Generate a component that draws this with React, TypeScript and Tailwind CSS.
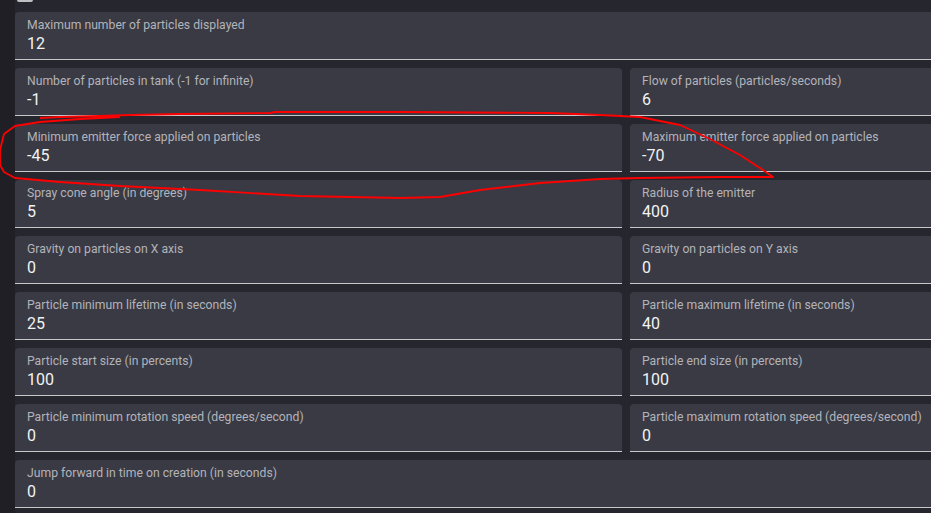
import React from "react";

type Field = { label: string; value: string; full?: boolean };

const fields: Field[] = [
  { label: "Maximum number of particles displayed", value: "12", full: true },
  { label: "Number of particles in tank (-1 for infinite)", value: "-1" },
  { label: "Flow of particles (particles/seconds)", value: "6" },
  { label: "Minimum emitter force applied on particles", value: "-45" },
  { label: "Maximum emitter force applied on particles", value: "-70" },
  { label: "Spray cone angle (in degrees)", value: "5" },
  { label: "Radius of the emitter", value: "400" },
  { label: "Gravity on particles on X axis", value: "0" },
  { label: "Gravity on particles on Y axis", value: "0" },
  { label: "Particle minimum lifetime (in seconds)", value: "25" },
  { label: "Particle maximum lifetime (in seconds)", value: "40" },
  { label: "Particle start size (in percents)", value: "100" },
  { label: "Particle end size (in percents)", value: "100" },
  { label: "Particle minimum rotation speed (degrees/second)", value: "0" },
  { label: "Particle maximum rotation speed (degrees/second)", value: "0" },
  { label: "Jump forward in time on creation (in seconds)", value: "0", full: true },
];

function Card({ f }: { f: Field }) {
  return (
    <div
      className={
        "h-[48px] bg-[#393a43] rounded-t-[4px] border-b border-[#c8c8cc] px-[12px] pt-[5px] flex flex-col " +
        (f.full ? "col-span-2" : "")
      }
    >
      <div className="text-[12.2px] leading-[16px] text-[#b3b3ba] whitespace-nowrap">{f.label}</div>
      <div className="text-[16px] leading-[22px] text-[#f2f2f4] whitespace-nowrap">{f.value}</div>
    </div>
  );
}

const pts =
  "40,118 60,117 100,116 130,115 180,114 270,113 275,112 400,112 550,113 600,115 640,117 680,125 710,139 740,155 760,168 773,177 720,177 640,178 600,179 540,183 480,190 440,197 400,198 300,196 200,190 120,186 60,182 15,178 4,172 0,165 0,150 4,134 15,126 40,122 80,119 120,117";

export default function App() {
  return (
    <div
      className="relative w-[931px] h-[513px] overflow-hidden bg-[#26262e] flex"
      style={{ fontFamily: "Roboto, 'Open Sans', sans-serif" }}
    >
      <div className="w-[15px] shrink-0 bg-[#1f1f25]" />
      <div className="flex flex-col">
        <div className="h-[2px] w-[16px] ml-[2px] bg-[#bfbfc4] rounded-b-[2px]" />
        <div className="mt-[10px] grid grid-cols-[607px_607px] gap-x-[8px] gap-y-[8px]">
          {fields.map((f, i) => (
            <Card key={i} f={f} />
          ))}
        </div>
      </div>
      <svg
        className="absolute inset-0 pointer-events-none"
        width="931"
        height="513"
        viewBox="0 0 931 513"
      >
        <polyline points={pts} fill="none" stroke="#ff0000" strokeWidth="1.8" strokeLinejoin="round" />
      </svg>
    </div>
  );
}
